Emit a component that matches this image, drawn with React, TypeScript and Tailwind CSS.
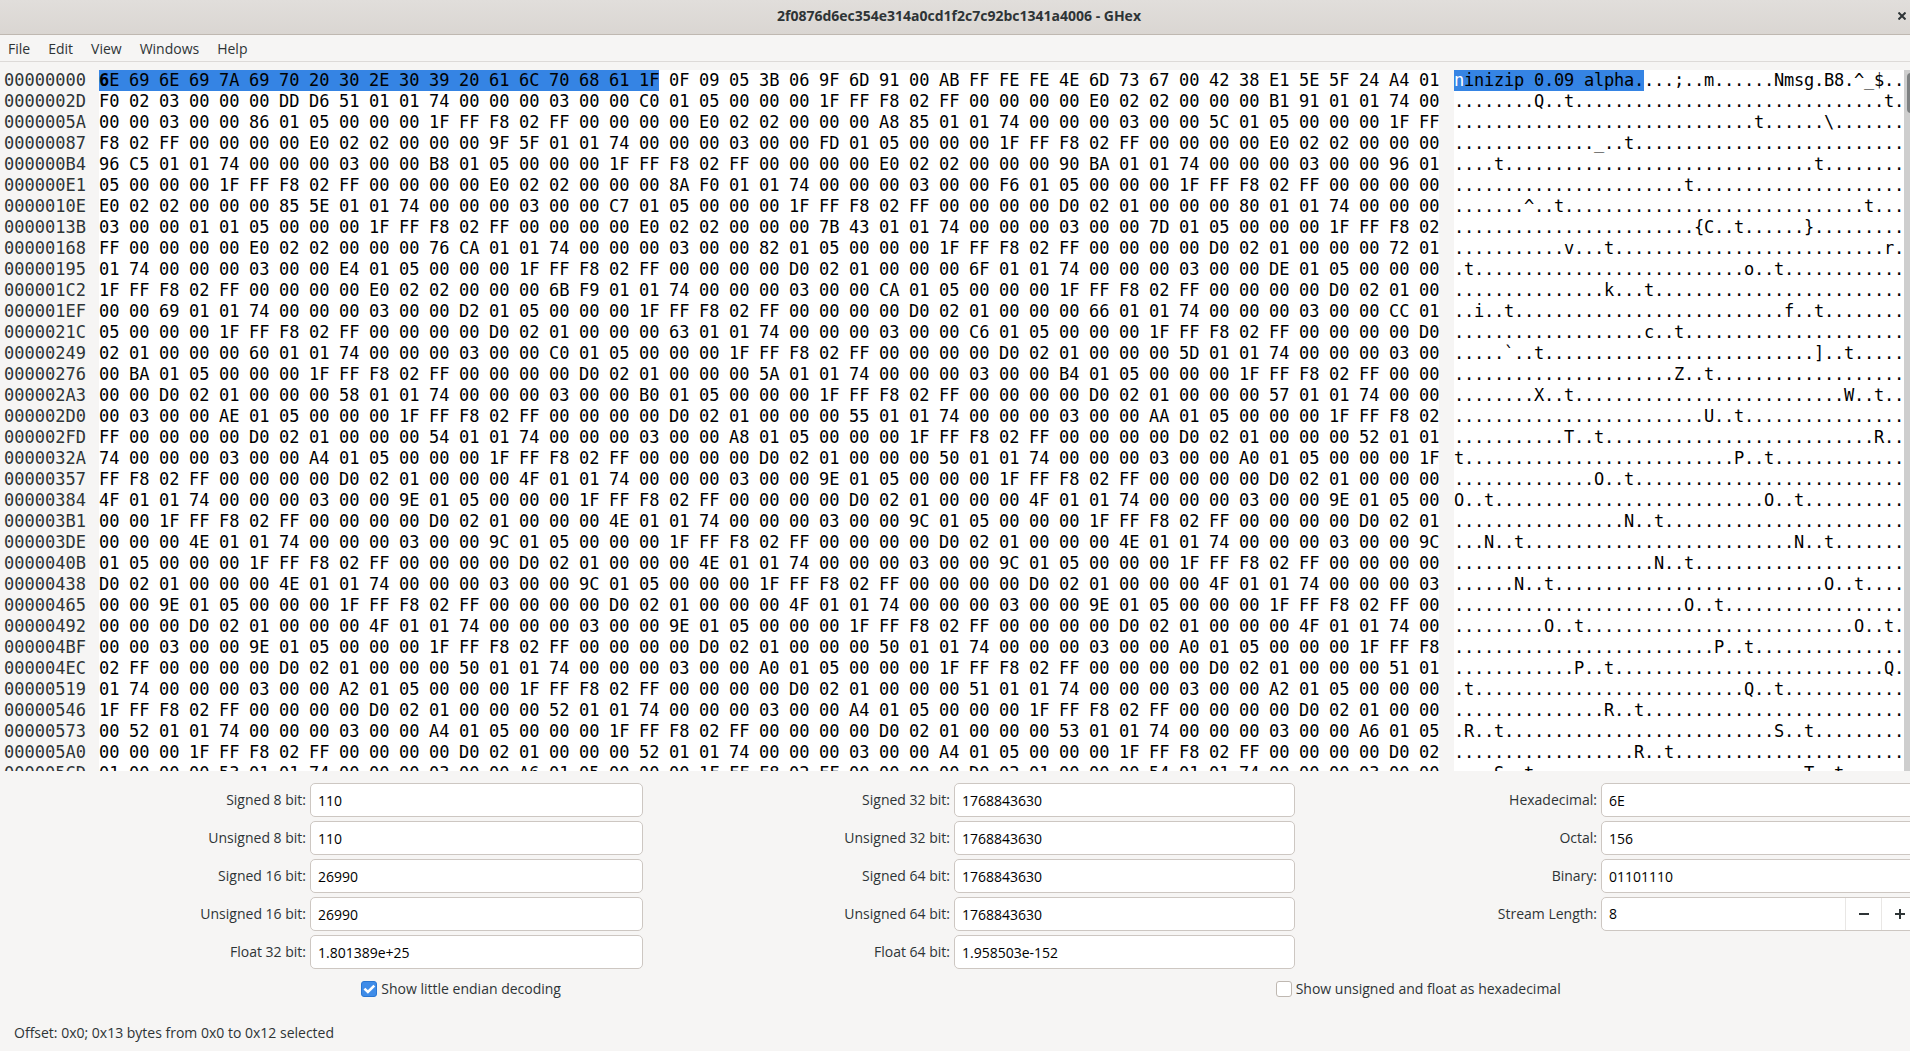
import { useState } from "react";
import type { ReactNode } from "react";

const BYTES_PER_ROW = 45;
const VISIBLE_ROWS = 34;
const SELECTION_LENGTH = 19;

const HEADER =
  "6E 69 6E 69 7A 69 70 20 30 2E 30 39 20 61 6C 70 68 61 1F 0F 09 05 3B 06 9F 6D 91 00 AB FF FE FE 4E 6D 73 67 00 42 38 E1 5E 5F 24 A4 01 " +
  "F0 02 03 00 00 00 DD D6 51 01 01 74 00 00 00 03 00 00 C0 01 05 00 00 00";

// Each record is a packed size (one or two bytes) and a low length byte.
const RECORDS: [string, string][] = [
  ["B1 91", "86"],
  ["A8 85", "5C"],
  ["9F 5F", "FD"],
  ["96 C5", "B8"],
  ["90 BA", "96"],
  ["8A F0", "F6"],
  ["85 5E", "C7"],
  ["80", "01"],
  ["7B 43", "7D"],
  ["76 CA", "82"],
  ["72", "E4"],
  ["6F", "DE"],
  ["6B F9", "CA"],
  ["69", "D2"],
  ["66", "CC"],
  ["63", "C6"],
  ["60", "C0"],
  ["5D", "BA"],
  ["5A", "B4"],
  ["58", "B0"],
  ["57", "AE"],
  ["55", "AA"],
  ["54", "A8"],
  ["52", "A4"],
  ["50", "A0"],
  ["4F", "9E"],
  ["4F", "9E"],
  ["4F", "9E"],
  ["4E", "9C"],
  ["4E", "9C"],
  ["4E", "9C"],
  ["4E", "9C"],
  ["4E", "9C"],
  ["4F", "9E"],
  ["4F", "9E"],
  ["4F", "9E"],
  ["4F", "9E"],
  ["50", "A0"],
  ["50", "A0"],
  ["51", "A2"],
  ["51", "A2"],
  ["52", "A4"],
  ["52", "A4"],
  ["53", "A6"],
  ["52", "A4"],
  ["53", "A6"],
  ["54", "A8"],
  ["55", "AA"],
];

function encodeRecord([size, length]: [string, string]) {
  const kind = size.length > 2 ? "E0 02 02" : "D0 02 01";
  return `1F FF F8 02 FF 00 00 00 00 ${kind} 00 00 00 ${size} 01 01 74 00 00 00 03 00 00 ${length} 01 05 00 00 00`;
}

const BYTES = [HEADER, ...RECORDS.map(encodeRecord)].join(" ").split(" ");

const ROWS = Array.from({ length: VISIBLE_ROWS }, (_, row) => {
  const start = row * BYTES_PER_ROW;
  return { start, bytes: BYTES.slice(start, start + BYTES_PER_ROW) };
});

function toOffset(value: number) {
  return value.toString(16).toUpperCase().padStart(8, "0");
}

function toChar(byte: string) {
  const code = parseInt(byte, 16);
  return code >= 0x20 && code < 0x7f ? String.fromCharCode(code) : ".";
}

function HexByte({ byte, index }: { byte: string; index: number }) {
  const lastInRow = index % BYTES_PER_ROW === BYTES_PER_ROW - 1;
  const narrow = lastInRow || index === SELECTION_LENGTH - 1;
  return (
    <span
      className={`h-[21px] ${narrow ? "w-5" : "w-[30px]"} ${index < SELECTION_LENGTH ? "bg-[#3584e4]" : ""}`}
    >
      {index === 0 ? (
        <>
          <b>{byte[0]}</b>
          {byte[1]}
        </>
      ) : (
        byte
      )}
    </span>
  );
}

function HexView() {
  return (
    <main className="flex min-h-0 flex-1 overflow-hidden pt-2">
      <div className="flex min-w-0 flex-1 overflow-hidden font-['DejaVu_Sans_Mono',monospace] text-[17px] leading-[21px] whitespace-pre text-black">
        <div className="w-[99px] shrink-0 pl-1 text-[#2e3436]">
          {ROWS.map(({ start }) => (
            <div key={start} className="h-[21px]">
              {toOffset(start)}
            </div>
          ))}
        </div>
        <div className="shrink-0 bg-white">
          {ROWS.map(({ start, bytes }) => (
            <div key={start} className="grid h-[21px] grid-cols-[repeat(44,30px)_20px]">
              {bytes.map((byte, i) => (
                <HexByte key={i} byte={byte} index={start + i} />
              ))}
            </div>
          ))}
        </div>
        <div className="ml-[15px] flex-1 bg-white">
          {ROWS.map(({ start, bytes }) => (
            <div key={start} className="grid h-[21px] grid-cols-[repeat(45,10px)]">
              {bytes.map((byte, i) => (
                <span
                  key={i}
                  className={`h-[21px] ${start + i < SELECTION_LENGTH ? "bg-[#3584e4]" : ""} ${start + i === 0 ? "text-white" : ""}`}
                >
                  {toChar(byte)}
                </span>
              ))}
            </div>
          ))}
        </div>
      </div>
      <div className="w-3.5 shrink-0 bg-[#cecece] p-[3px]">
        <div className="h-10 w-2 rounded-full bg-[#7e8182]" />
      </div>
    </main>
  );
}

const FIELDS = [
  ["Signed 8 bit:", "110", "Signed 32 bit:", "1768843630", "Hexadecimal:", "6E"],
  ["Unsigned 8 bit:", "110", "Unsigned 32 bit:", "1768843630", "Octal:", "156"],
  ["Signed 16 bit:", "26990", "Signed 64 bit:", "1768843630", "Binary:", "01101110"],
  ["Unsigned 16 bit:", "26990", "Unsigned 64 bit:", "1768843630"],
  ["Float 32 bit:", "1.801389e+25", "Float 64 bit:", "1.958503e-152"],
];

function FieldLabel({ id, children }: { id: string; children: ReactNode }) {
  return (
    <label htmlFor={id} className="self-center text-right">
      {children}
    </label>
  );
}

function Field({ label, value }: { label: string; value: string }) {
  const id = label.replace(/\W+/g, "-").toLowerCase();
  return (
    <>
      <FieldLabel id={id}>{label}</FieldLabel>
      <input
        id={id}
        readOnly
        value={value}
        className="h-[34px] w-full min-w-0 rounded-[5px] border border-[#cdc7c2] bg-white px-[7px] text-black outline-none"
      />
    </>
  );
}

function StreamLength() {
  const [length, setLength] = useState(8);
  const button = "flex w-9 items-center justify-center border-l border-[#e9e7e5] text-[#2e3436]";
  return (
    <>
      <FieldLabel id="stream-length">Stream Length:</FieldLabel>
      <div className="flex h-[34px] min-w-0 overflow-hidden rounded-[5px] border border-[#cdc7c2] bg-white">
        <input
          id="stream-length"
          readOnly
          value={length}
          className="w-0 min-w-0 flex-1 px-[7px] text-black outline-none"
        />
        <button
          type="button"
          aria-label="Decrease"
          className={button}
          onClick={() => setLength(Math.max(1, length - 1))}
        >
          <svg width="10" height="10" viewBox="0 0 10 10" fill="currentColor" aria-hidden="true">
            <path d="M0 4h10v2H0z" />
          </svg>
        </button>
        <button type="button" aria-label="Increase" className={button} onClick={() => setLength(length + 1)}>
          <svg width="10" height="10" viewBox="0 0 10 10" fill="currentColor" aria-hidden="true">
            <path d="M4 0h2v4h4v2H6v4H4V6H0V4h4z" />
          </svg>
        </button>
      </div>
    </>
  );
}

function Check({ label, initial }: { label: string; initial: boolean }) {
  const [checked, setChecked] = useState(initial);
  return (
    <label className="flex flex-auto items-center justify-center gap-1">
      <span className="grid size-4">
        <input
          type="checkbox"
          checked={checked}
          onChange={() => setChecked(!checked)}
          className="col-start-1 row-start-1 size-4 appearance-none rounded-[3px] border border-[#bfb8b1] bg-white checked:border-[#2a76d2] checked:bg-[#3f8ce8]"
        />
        {checked && (
          <svg
            viewBox="0 0 16 16"
            className="pointer-events-none col-start-1 row-start-1 size-4"
            fill="none"
            stroke="white"
            strokeWidth="2.6"
            aria-hidden="true"
          >
            <path d="M3.4 7.6 6.9 11l6.4-6.4" />
          </svg>
        )}
      </span>
      {label}
    </label>
  );
}

export default function App() {
  return (
    <div className="h-screen overflow-hidden bg-[#f6f5f4] font-['Open_Sans',sans-serif] text-sm leading-5 text-[#2e3436]">
      <div className="flex h-full w-[calc(100%+8px)] flex-col">
        <header className="grid h-[35px] shrink-0 grid-cols-[1fr_auto_1fr] items-center border-b border-[#bfb8b1] bg-linear-to-b from-[#e1dedb] to-[#dad6d2] pb-0.5">
          <h1 className="col-start-2 font-bold">2f0876d6ec354e314a0cd1f2c7c92bc1341a4006 - GHex</h1>
          <button type="button" aria-label="Close" className="mr-2.5 justify-self-end p-0.5">
            <svg width="8" height="8" viewBox="0 0 8 8" stroke="#2e3436" strokeWidth="2" aria-hidden="true">
              <path d="m.5.5 7 7M7.5.5l-7 7" />
            </svg>
          </button>
        </header>
        <nav className="flex h-[27px] shrink-0 items-center gap-[18px] border-b border-[#dddad8] px-2 pt-0.5">
          <button type="button">File</button>
          <button type="button">Edit</button>
          <button type="button">View</button>
          <button type="button">Windows</button>
          <button type="button">Help</button>
        </nav>
        <HexView />
        <section className="shrink-0 pt-3">
          <div className="grid grid-cols-[306fr_333fr_303fr_341fr_298fr_317fr] gap-1">
            {FIELDS.map((row, r) => [
              <Field key={row[0]} label={row[0]} value={row[1]} />,
              <Field key={row[2]} label={row[2]} value={row[3]} />,
              row[4] ? <Field key={row[4]} label={row[4]} value={row[5]} /> : r === 3 && <StreamLength key="stream" />,
            ])}
          </div>
          <div className="mt-2 flex h-6 items-center pl-1">
            <Check label="Show little endian decoding" initial />
            <Check label="Show unsigned and float as hexadecimal" initial={false} />
          </div>
        </section>
        <footer className="mt-5 h-[30px] shrink-0 px-3.5 pt-0.5">
          Offset: 0x0; 0x13 bytes from 0x0 to 0x12 selected
        </footer>
      </div>
    </div>
  );
}
